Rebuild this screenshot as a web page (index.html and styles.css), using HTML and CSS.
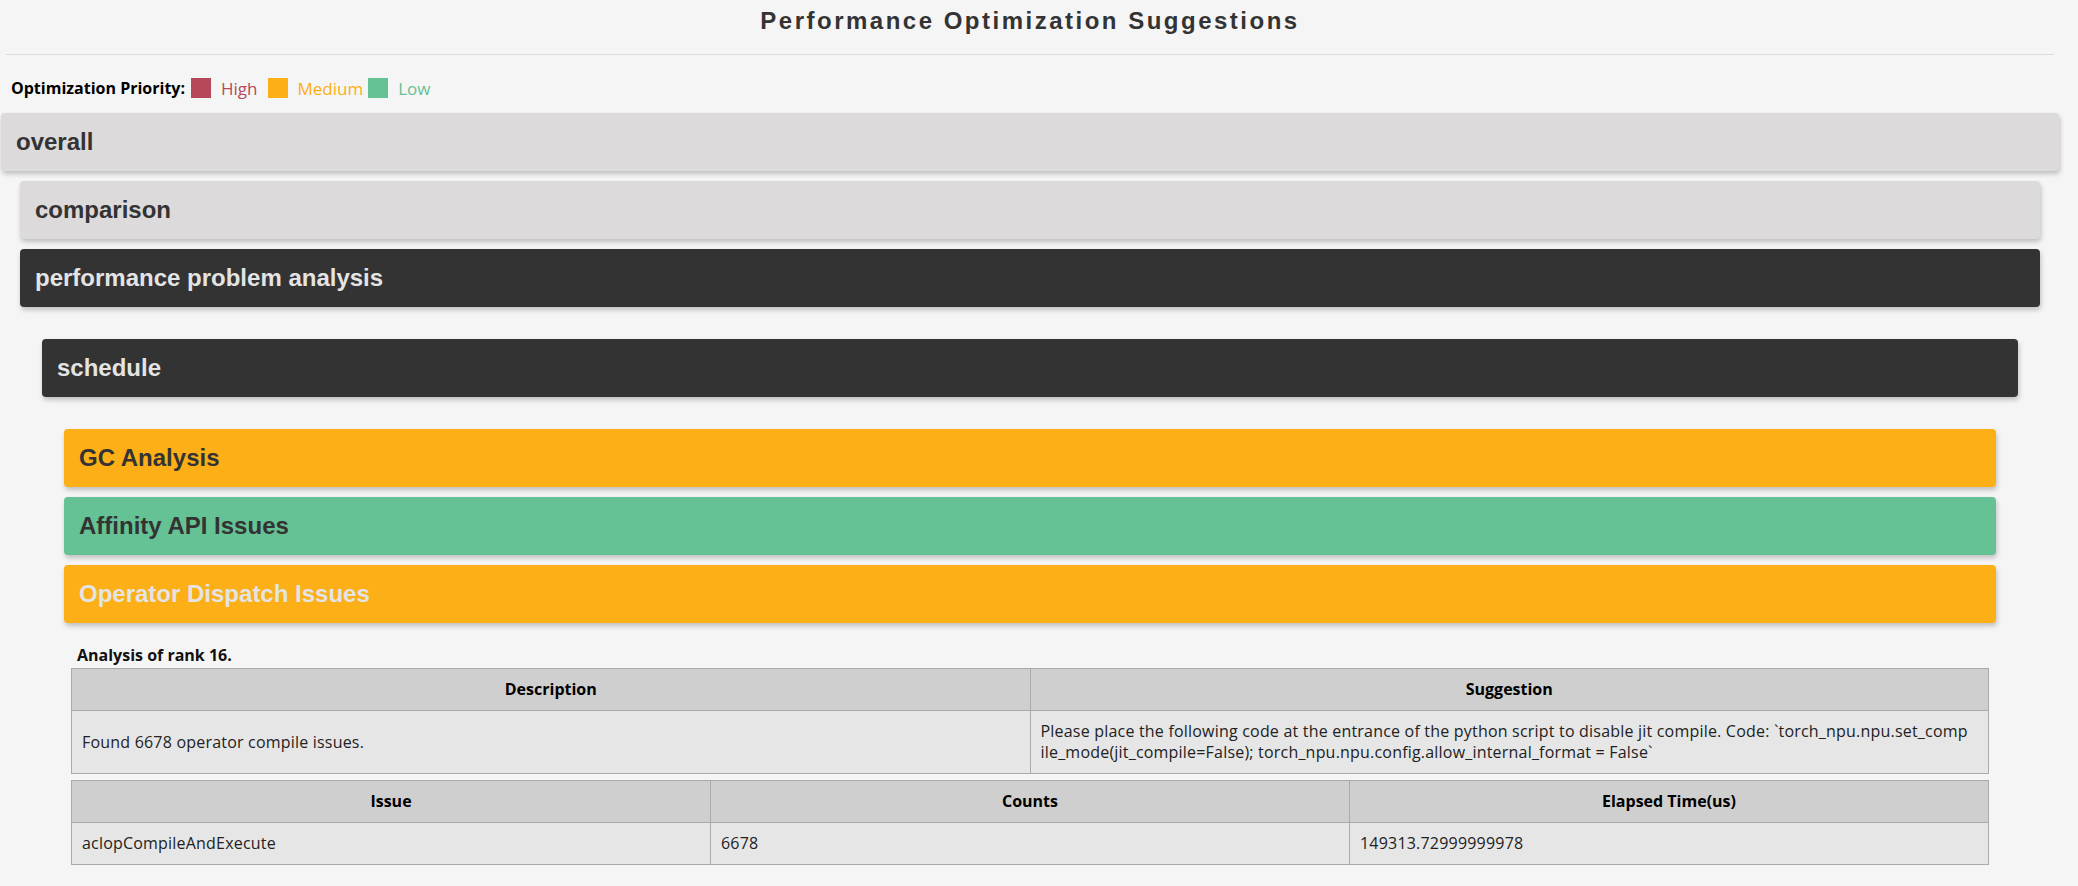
FILE: index.html
```html
<!DOCTYPE html>
<html lang="en">
<head>
  <meta charset="UTF-8" />
  <title>Performance Optimization Suggestions</title>
  <link rel="stylesheet" href="styles.css">
</head>
<body>
  <div class="page">
    <h1 class="title">Performance Optimization Suggestions</h1>
    <hr class="rule">

    <div class="legend">
      <b>Optimization Priority:</b>
      <span class="swatch high"></span><span class="lbl high-text">High</span>
      <span class="swatch medium"></span><span class="lbl medium-text">Medium</span>
      <span class="swatch low"></span><span class="lbl low-text">Low</span>
    </div>

    <div class="bar light">overall</div>

    <div class="group">
      <div class="bar light">comparison</div>
      <div class="bar dark">performance problem analysis</div>

      <div class="sub">
        <div class="bar dark">schedule</div>

        <div class="sub">
          <div class="bar medium">GC Analysis</div>
          <div class="bar low">Affinity API Issues</div>
          <div class="bar medium open">Operator Dispatch Issues</div>

          <div class="detail">
            <p class="rank">Analysis of rank 16.</p>
            <table class="grid">
              <tr>
                <th>Description</th>
                <th>Suggestion</th>
              </tr>
              <tr>
                <td>Found 6678 operator compile issues.</td>
                <td class="suggest">Please place the following code at the entrance of the python script to disable jit compile. Code: `torch_npu.npu.set_compile_mode(jit_compile=False); torch_npu.npu.config.allow_internal_format = False`</td>
              </tr>
            </table>
            <table class="grid">
              <tr>
                <th>Issue</th>
                <th>Counts</th>
                <th>Elapsed Time(us)</th>
              </tr>
              <tr>
                <td>aclopCompileAndExecute</td>
                <td>6678</td>
                <td>149313.72999999978</td>
              </tr>
            </table>
          </div>
        </div>
      </div>
    </div>
  </div>
</body>
</html>
```

FILE: styles.css
```css
:root {
  --high: #b5495b;
  --medium: #fcaf17;
  --low: #65c294;
  --dark: #333333;
  --light: #dcdada;
}

body {
  margin: 0;
  background: #f5f5f5;
  color: #333;
  font-family: "Open Sans", "Liberation Sans", sans-serif;
}

.page {
  width: 2060px;
  padding-bottom: 20px;
}

.title {
  margin: 7px 0 0;
  font-family: "Liberation Sans", Arial, sans-serif;
  font-size: 24px;
  line-height: 28px;
  letter-spacing: 2.5px;
  text-align: center;
  color: #333;
}

.rule {
  margin: 19px 6px 0;
  height: 0;
  border: 0;
  border-top: 1px solid #dcdcdc;
}

.legend {
  display: flex;
  align-items: center;
  height: 20px;
  margin: 23px 0 15px 11px;
  font-size: 16px;
}

.legend b {
  color: #000;
  margin-right: 6px;
}

.swatch {
  width: 20px;
  height: 20px;
}

.swatch.high { background: var(--high); }
.swatch.medium { background: var(--medium); }
.swatch.low { background: var(--low); }

.lbl {
  margin: 0 10px;
  font-size: 17px;
}

.lbl.medium-text { margin-right: 5px; }

.high-text { color: var(--high); }
.medium-text { color: var(--medium); }
.low-text { color: var(--low); }

/* collapsible headers */
.bar {
  margin: 0 1px 10px;
  padding: 15px 15px;
  height: 28px;
  border-radius: 4px;
  font-family: "Liberation Sans", Arial, sans-serif;
  font-size: 24px;
  font-weight: bold;
  line-height: 28px;
  color: #333;
  box-shadow: 1px 3px 5px rgba(0, 0, 0, 0.22);
}

.bar.light { background: var(--light); }
.bar.dark { background: var(--dark); color: #e4e4e4; }
.bar.medium { background: var(--medium); }
.bar.low { background: var(--low); }
.bar.open { color: #e4e4e4; }

.group {
  padding: 0 20px;
}

.group .bar,
.sub .bar {
  margin-left: 0;
  margin-right: 0;
}

.sub {
  padding: 22px 22px 0;
}

.detail {
  padding: 12px 7px 0;
}

.rank {
  margin: 0 0 2px 6px;
  font-size: 16px;
  font-weight: bold;
  line-height: 21px;
  color: #111;
}

.grid {
  width: 100%;
  border-collapse: collapse;
  table-layout: fixed;
  margin-bottom: 6px;
  font-size: 16px;
  line-height: 21px;
}

.grid th,
.grid td {
  border: 1px solid #aaa;
  padding: 10px 10px;
}

.grid th {
  background: #cfcfcf;
  color: #000;
  text-align: center;
}

.grid td {
  background: #e6e6e6;
  color: #222;
  letter-spacing: 0.2px;
  word-break: break-all;
}

.grid td.suggest {
  padding-right: 18px;
}
```
